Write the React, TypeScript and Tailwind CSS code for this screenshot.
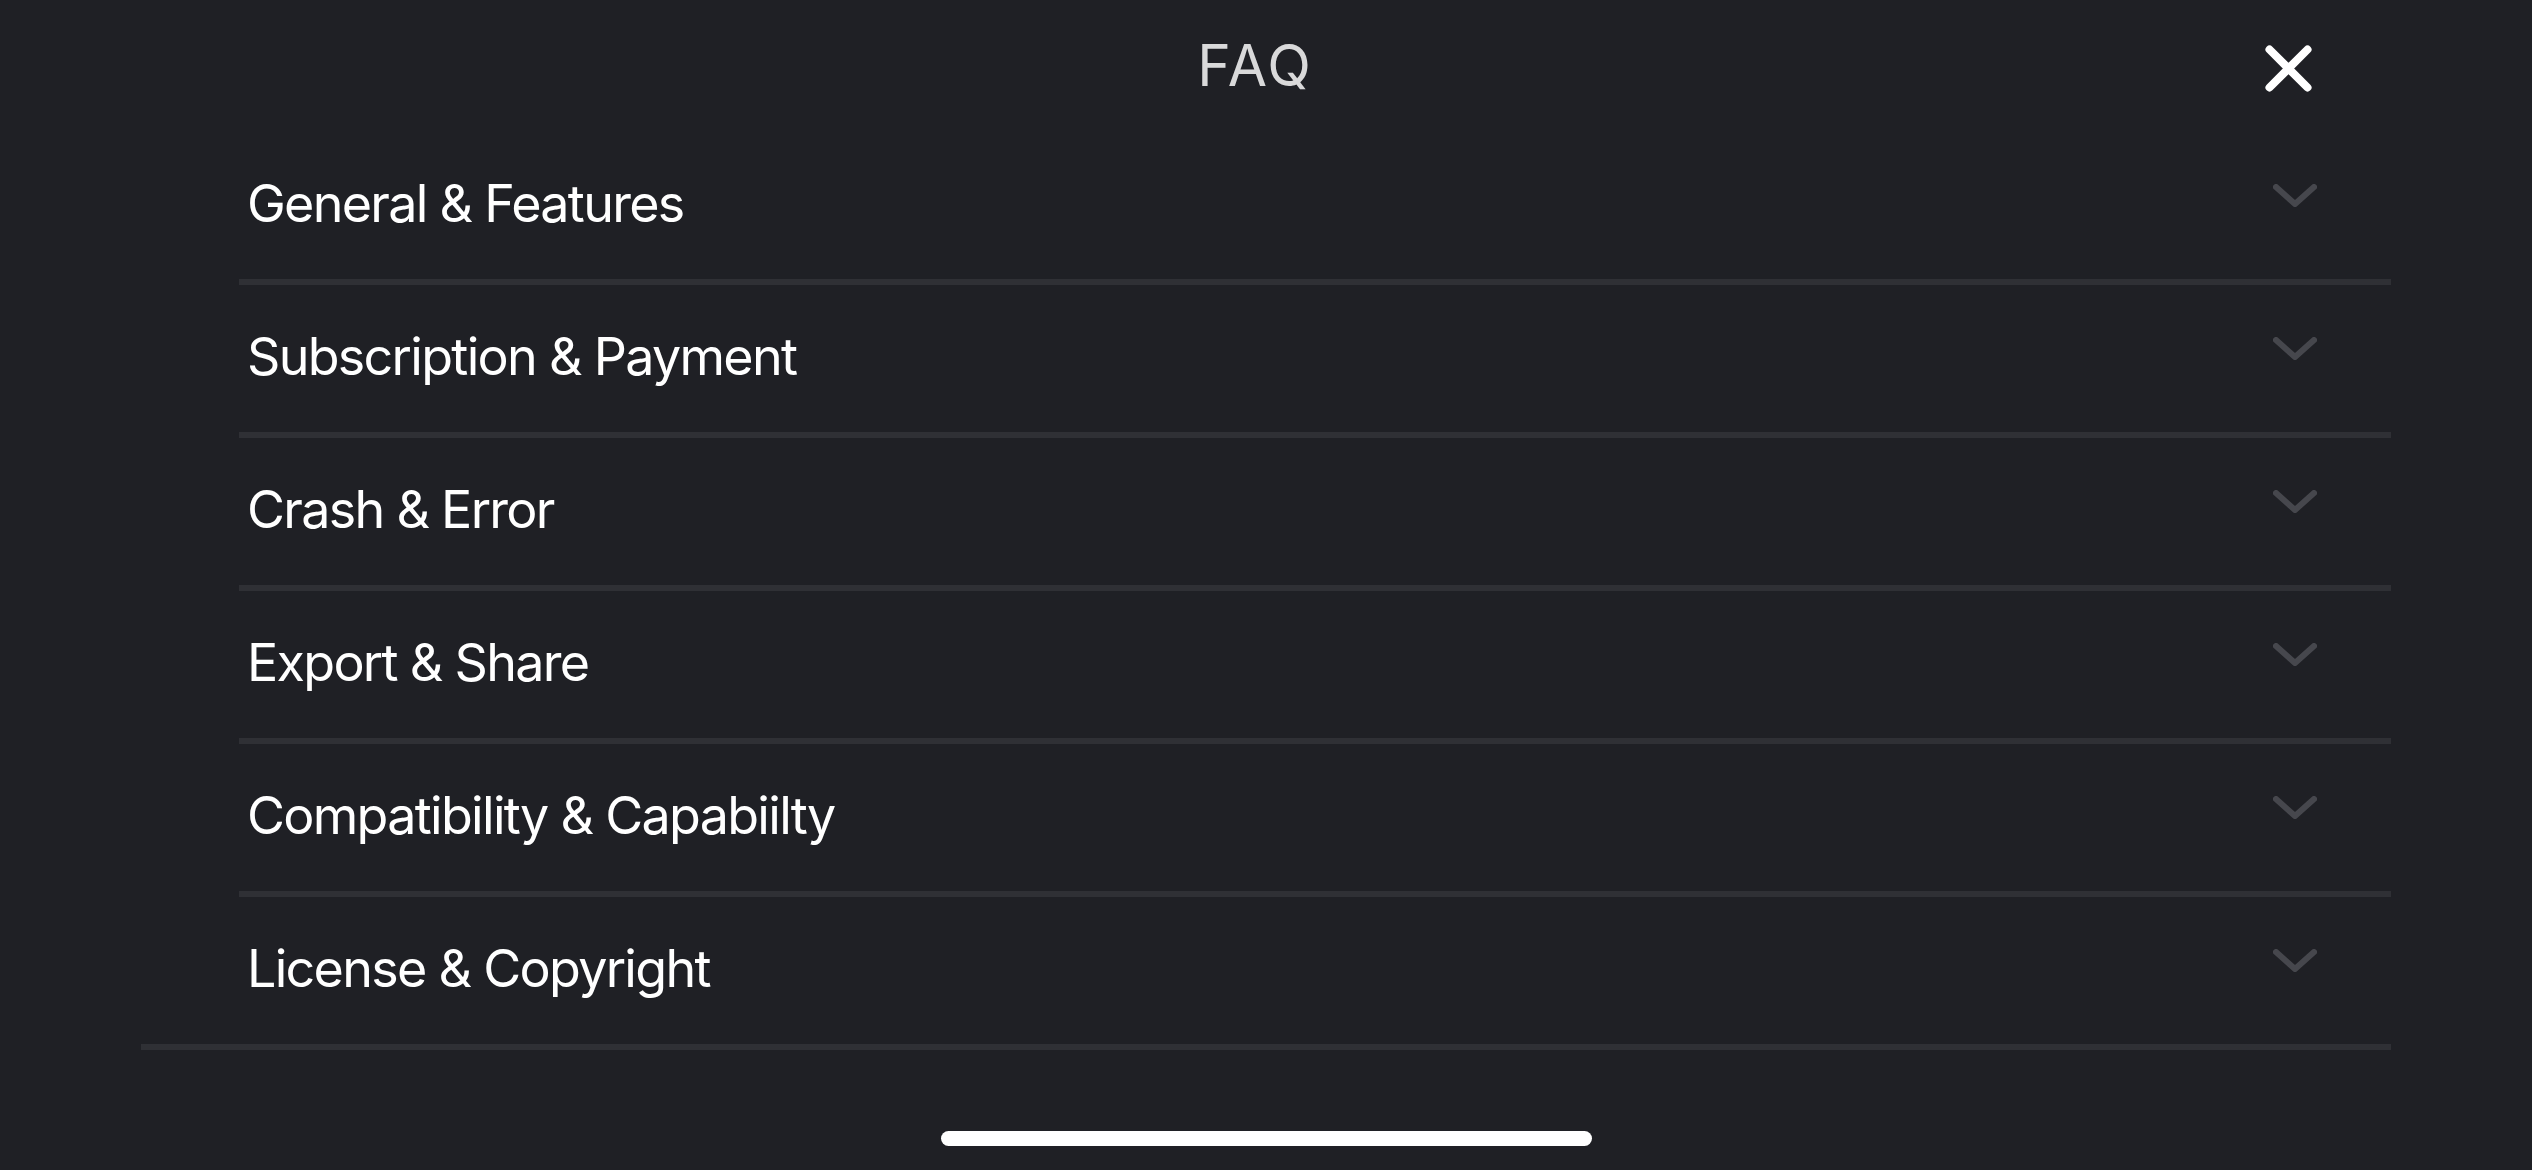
import React from 'react';

const sections = [
  'General & Features',
  'Subscription & Payment',
  'Crash & Error',
  'Export & Share',
  'Compatibility & Capabiilty',
  'License & Copyright',
];

const Chevron = () => (
  <svg width="44" height="23" viewBox="0 0 44 23" fill="none">
    <path d="M3 3 L22 20 L41 3" stroke="#46474d" strokeWidth="6" strokeLinecap="round" strokeLinejoin="round" />
  </svg>
);

const CloseIcon = () => (
  <svg width="47" height="47" viewBox="0 0 47 47" fill="none">
    <path d="M4.5 4.5 L42.5 42.5 M42.5 4.5 L4.5 42.5" stroke="#ffffff" strokeWidth="8" strokeLinecap="round" />
  </svg>
);

const FaqRow = ({ title, last }: { title: string; last: boolean }) => {
  return (
    <div>
      <div className="h-[147px] flex items-center justify-between pl-[106px] pr-[74px]">
        <span className="text-[52px] leading-none tracking-[-1.7px] text-white pb-1">{title}</span>
        <div className="mb-[20px]">
          <Chevron />
        </div>
      </div>
      <div className={`h-[6px] bg-[#2f3035] ${last ? '' : 'ml-[98px]'}`}></div>
    </div>
  );
};

const App: React.FC = () => {
  return (
    <div
      className="w-[2532px] h-[1170px] bg-[#1f2025] flex flex-col overflow-hidden"
      style={{ fontFamily: 'Inter, "Noto Sans", sans-serif' }}
    >
      <div className="relative h-[132px] pt-[37px] pr-[22px] text-center">
        <h1 className="text-[57px] leading-none tracking-[2px] text-[#d9d9da] font-normal">FAQ</h1>
        <button className="absolute left-[2265px] top-[45px]">
          <CloseIcon />
        </button>
      </div>

      <div className="ml-[141px] w-[2250px]">
        {sections.map((s, i) => (
          <FaqRow key={s} title={s} last={i === sections.length - 1} />
        ))}
      </div>

      <div className="flex-1"></div>
      <div className="flex justify-center pb-[24px]">
        <div className="w-[651px] h-[15px] rounded-full bg-white"></div>
      </div>
    </div>
  );
};

export default App;
